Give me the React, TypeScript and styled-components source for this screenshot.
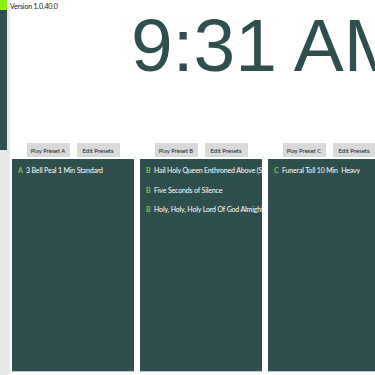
import React from "react";
import styled, { createGlobalStyle } from "styled-components";

const Global = createGlobalStyle`
  html, body { margin: 0; padding: 0; background: #ffffff; }
  body { font-family: Lato, "Open Sans", sans-serif; }
`;

const Root = styled.div`
  display: flex;
  width: 375px;
  height: 375px;
  overflow: hidden;
`;

const Sidebar = styled.div`
  flex: 0 0 10px;
  background: #e8e8e8;
`;

const StatusBar = styled.div`
  width: 7px;
  height: 150px;
  background: #2f4f4f;
  border-top: 10px solid #8cf21a;
  box-sizing: border-box;
`;

const Main = styled.div`
  flex: 1;
  min-width: 0;
  display: flex;
  flex-direction: column;
`;

const Header = styled.div`
  display: flex;
  align-items: flex-start;
  height: 143px;
`;

const Version = styled.div`
  flex: 0 0 121px;
  font-size: 7px;
  letter-spacing: -0.15px;
  line-height: 12px;
  color: #111;
`;

const Clock = styled.div`
  font-family: "Liberation Sans", Arial, sans-serif;
  font-size: 75px;
  line-height: 86px;
  margin-top: 2px;
  color: #2f4f4f;
  white-space: nowrap;
`;

const Columns = styled.div`
  display: flex;
  gap: 6px;
  margin-left: 2px;
`;

const Column = styled.div`
  flex: 0 0 122px;
  width: 122px;
  min-width: 0;
  display: flex;
  flex-direction: column;
`;

const ButtonBar = styled.div`
  display: flex;
  justify-content: center;
  gap: 7px;
  height: 14px;
  margin-bottom: 2px;
`;

const Button = styled.button`
  width: 43px;
  height: 14px;
  padding: 0;
  border: none;
  background: #d9d9d9;
  color: #1a1a1a;
  font-family: Lato, "Open Sans", sans-serif;
  font-size: 6px;
  white-space: nowrap;
`;

const Panel = styled.div`
  height: 213px;
  background: #2f4f4f;
  border-bottom: 1px solid #b8c8c8;
  padding-top: 1.5px;
  box-sizing: border-box;
  overflow: hidden;
`;

const Item = styled.div`
  display: flex;
  align-items: center;
  height: 19.5px;
  padding-left: 6px;
  white-space: pre;
  font-size: 7px;
  letter-spacing: -0.15px;
`;

const Tag = styled.span`
  flex: 0 0 8px;
  color: #7ec242;
  font-weight: 700;
`;

const Title = styled.span`
  color: #ffffff;
`;

const presets = [
  { key: "A", items: ["3 Bell Peal 1 Min Standard"] },
  {
    key: "B",
    items: [
      "Hail Holy Queen Enthroned Above (Solemn)",
      "Five Seconds of Silence",
      "Holy, Holy, Holy Lord Of God Almighty",
    ],
  },
  { key: "C", items: ["Funeral Toll 10 Min  Heavy"] },
];

export default function App() {
  return (
    <Root>
      <Global />
      <Sidebar>
        <StatusBar />
      </Sidebar>
      <Main>
        <Header>
          <Version>Version 1.0.40.0</Version>
          <Clock>9:31 AM</Clock>
        </Header>
        <Columns>
          {presets.map((p) => (
            <Column key={p.key}>
              <ButtonBar>
                <Button>Play Preset {p.key}</Button>
                <Button>Edit Presets</Button>
              </ButtonBar>
              <Panel>
                {p.items.map((t) => (
                  <Item key={t}>
                    <Tag>{p.key}</Tag>
                    <Title>{t}</Title>
                  </Item>
                ))}
              </Panel>
            </Column>
          ))}
        </Columns>
      </Main>
    </Root>
  );
}
